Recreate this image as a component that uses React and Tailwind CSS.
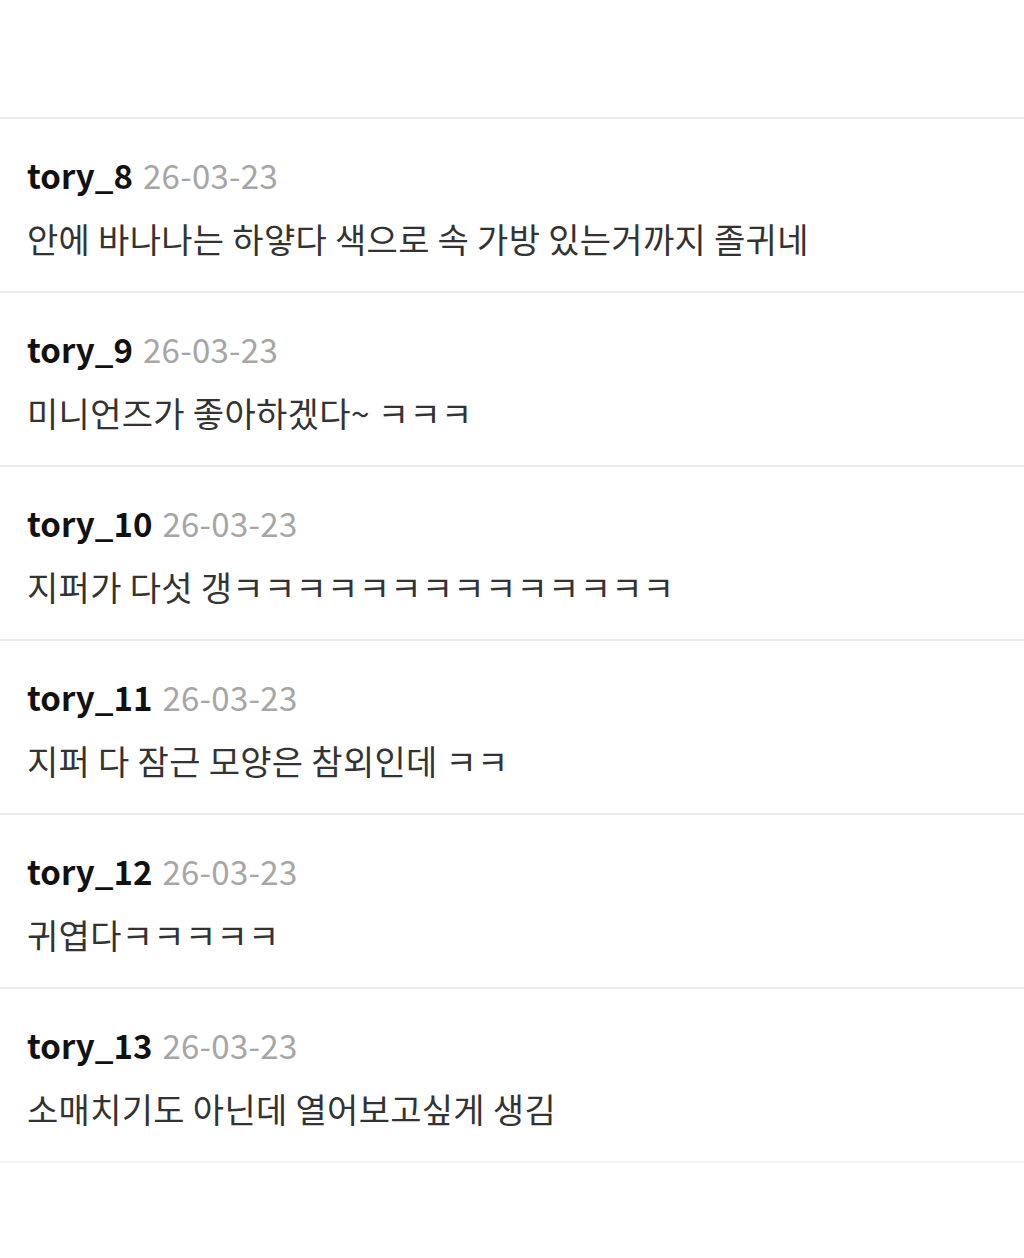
const comments = [
  { user: 'tory_8', date: '26-03-23', text: '안에 바나나는 하얗다 색으로 속 가방 있는거까지 졸귀네' },
  { user: 'tory_9', date: '26-03-23', text: '미니언즈가 좋아하겠다~ ㅋㅋㅋ' },
  { user: 'tory_10', date: '26-03-23', text: '지퍼가 다섯 갱ㅋㅋㅋㅋㅋㅋㅋㅋㅋㅋㅋㅋㅋㅋ' },
  { user: 'tory_11', date: '26-03-23', text: '지퍼 다 잠근 모양은 참외인데 ㅋㅋ' },
  { user: 'tory_12', date: '26-03-23', text: '귀엽다ㅋㅋㅋㅋㅋ' },
  { user: 'tory_13', date: '26-03-23', text: '소매치기도 아닌데 열어보고싶게 생김' },
];

export default function App() {
  return (
    <div
      className="w-[1024px] h-[1258px] bg-white overflow-hidden"
      style={{ fontFamily: '"Noto Sans CJK KR", "Noto Sans", sans-serif' }}
    >
      <div className="h-[117px]" />
      {comments.map(c => (
        <div key={c.user} className="border-t-2 border-[#ebebeb] pl-[27px] pt-[37px] pb-[33px]">
          <div className="h-[40px] flex items-center gap-[10px]">
            <span className="text-[33px] font-bold text-[#111]">{c.user}</span>
            <span className="text-[33px] text-[#a6a6a6] tracking-[0.3px]">{c.date}</span>
          </div>
          <div className="h-[40px] mt-[22px] flex items-center text-[34px] text-[#333] tracking-[0.3px] whitespace-nowrap">
            {c.text}
          </div>
        </div>
      ))}
      <div className="border-t-2 border-[#f3f3f3]" />
    </div>
  );
}
